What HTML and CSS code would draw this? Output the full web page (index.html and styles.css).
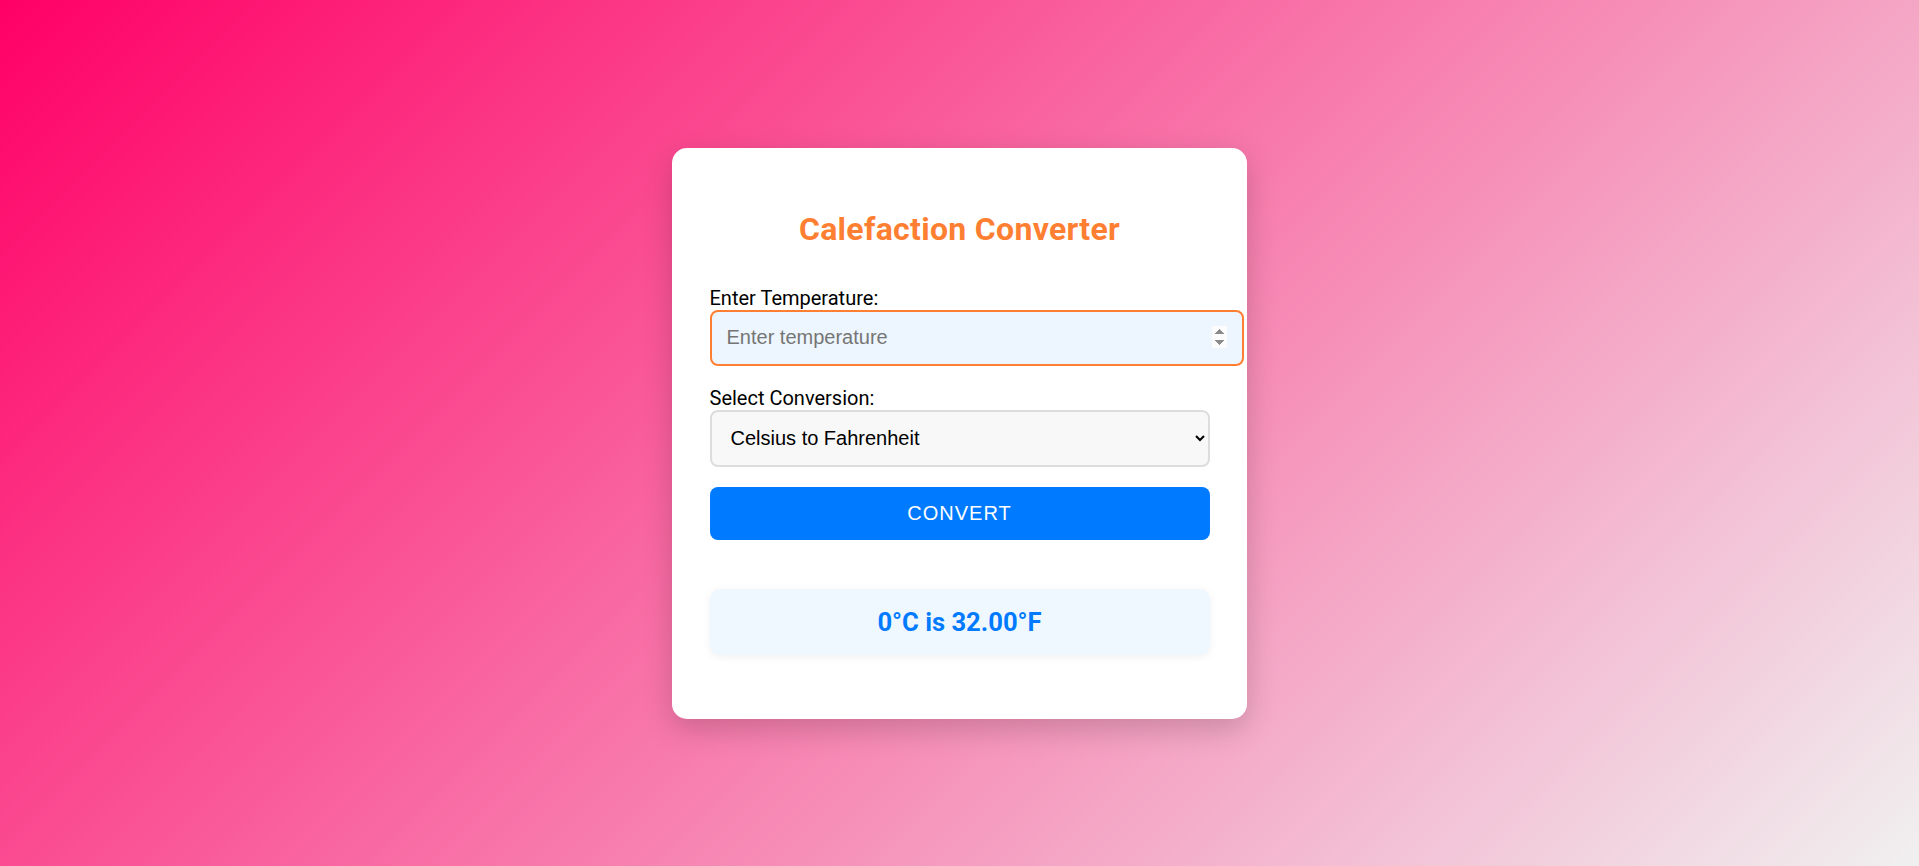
FILE: index.html
```html
<!DOCTYPE html>
<html lang="en">
<head>
<meta charset="utf-8">
<title>Calefaction Converter</title>
<link rel="stylesheet" href="styles.css">
</head>
<body>
  <div class="card">
    <h1 class="title">Calefaction Converter</h1>
    <label class="label" for="temp">Enter Temperature:</label>
    <input class="temp-input" id="temp" type="number" placeholder="Enter temperature">
    <label class="label" for="conv">Select Conversion:</label>
    <select class="conv-select" id="conv">
      <option>Celsius to Fahrenheit</option>
      <option>Fahrenheit to Celsius</option>
    </select>
    <button class="convert-btn" type="button">Convert</button>
    <div class="result">0°C is 32.00°F</div>
  </div>
</body>
</html>
```

FILE: styles.css
```css
html, body {
  margin: 0;
  padding: 0;
}
body {
  min-height: 100vh;
  display: flex;
  align-items: center;
  justify-content: center;
  background: linear-gradient(135deg, #ff0066 0%, #f0f0f0 100%);
  font-family: Roboto, "Liberation Sans", Arial, sans-serif;
}
.card {
  width: 500px;
  padding: 40px 37.5px;
  background: #ffffff;
  border-radius: 15px;
  box-shadow: 0 10px 30px rgba(0, 0, 0, 0.18);
  display: flex;
  flex-direction: column;
}
.title {
  margin: 23px 0 39px;
  text-align: center;
  color: #ff7f32;
  font-size: 32px;
  font-weight: 700;
  letter-spacing: 0.3px;
  line-height: 37px;
}
.label {
  display: block;
  font-size: 20px;
  color: #000;
  line-height: 23px;
}
.temp-input {
  box-sizing: content-box;
  width: 100%;
  height: 22px;
  padding: 15px;
  margin: 0 0 21px;
  border: 2px solid #ff7f32;
  border-radius: 8px;
  background: #edf5fe;
  font-family: "Liberation Sans", Arial, sans-serif;
  font-size: 20px;
  color: #000;
  outline: none;
}
.temp-input::placeholder {
  color: #757575;
}
.temp-input::-webkit-inner-spin-button {
  opacity: 1;
}
.conv-select {
  box-sizing: border-box;
  width: 100%;
  height: 57px;
  padding: 0 15px;
  margin: 0 0 20px;
  border: 2px solid #dddddd;
  border-radius: 8px;
  background-color: #f8f8f8;
  font-family: "Liberation Sans", Arial, sans-serif;
  font-size: 20px;
  color: #000;
}
.convert-btn {
  width: 100%;
  height: 53px;
  padding: 0 15px;
  border: none;
  border-radius: 8px;
  background: #007bff;
  color: #ffffff;
  font-family: "Liberation Sans", Arial, sans-serif;
  font-size: 20px;
  letter-spacing: 1px;
  text-transform: uppercase;
}
.result {
  margin: 49px 0 24px;
  padding: 18px;
  background: #f0f8ff;
  border-radius: 10px;
  box-shadow: 0 2px 10px rgba(0, 0, 0, 0.06);
  text-align: center;
  color: #007bff;
  font-size: 25.6px;
  font-weight: 700;
  line-height: 30px;
}
```
